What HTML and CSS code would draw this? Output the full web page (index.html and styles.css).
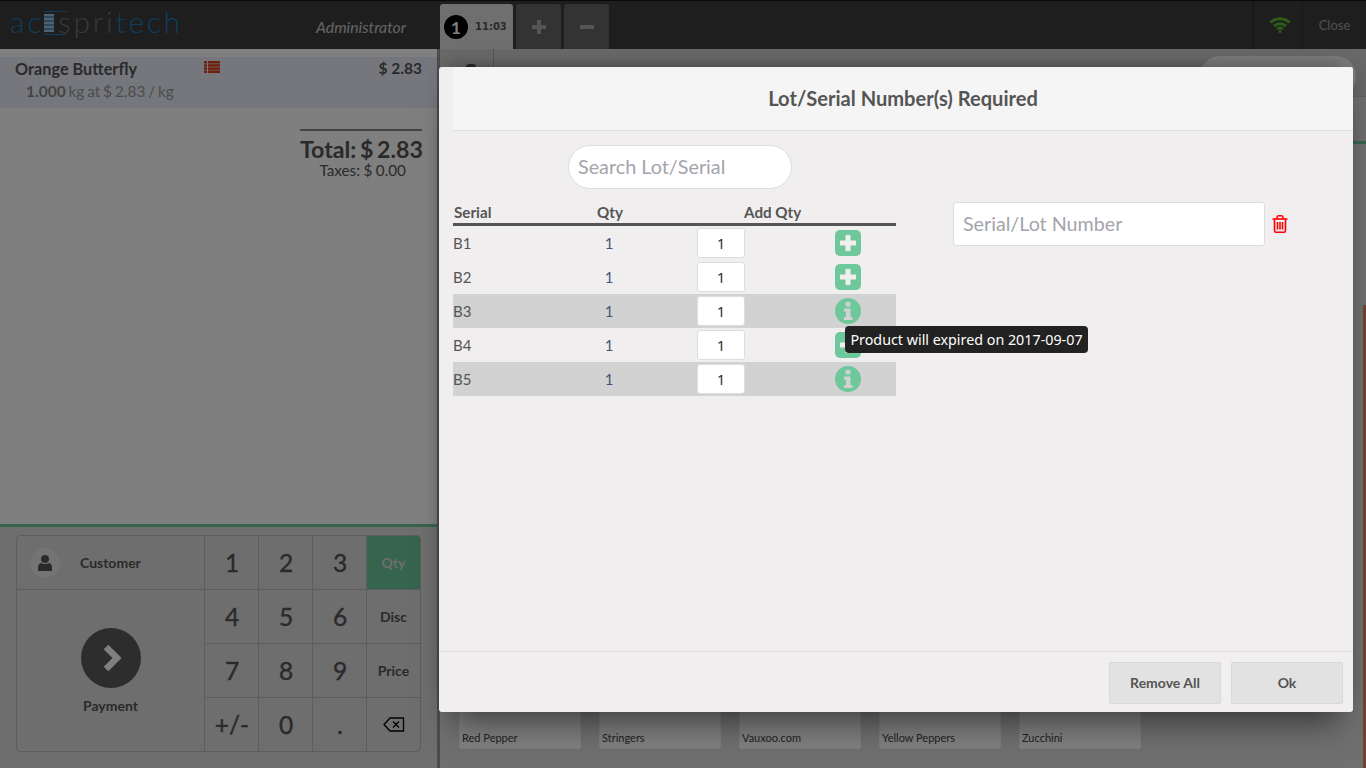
FILE: index.html
```html
<!DOCTYPE html>
<html lang="en">

<head>
  <meta charset="UTF-8">
  <meta name="viewport" content="width=device-width, initial-scale=1.0">
  <title>Point of Sale</title>
  <link rel="stylesheet" href="styles.css">
</head>

<body>

  <header class="topbar">
    <div class="logo">
      <span class="logo-blue">ac</span><span class="logo-bars"></span><span class="logo-grey">spri</span><span class="logo-blue">tech</span>
    </div>
    <div class="username">Administrator</div>
    <div class="tabs">
      <div class="tab active"><span class="tab-num">1</span><span class="tab-time">11:03</span></div>
      <div class="tab"><span class="plus-sign"></span></div>
      <div class="tab"><span class="minus-sign"></span></div>
    </div>
    <div class="status wifi">
      <svg width="22" height="18" viewBox="0 0 22 18" fill="none" stroke="#5cb82e" stroke-width="3">
        <path d="M1.500 6.500C7 1.500 15 1.500 20.500 6.500" />
        <path d="M5 10C8.500 7 13.500 7 17 10" />
        <path d="M8.200 13C10 11.800 12 11.800 13.800 13" />
        <circle cx="11" cy="15.500" r="1.500" fill="#5cb82e" stroke="none" />
      </svg>
    </div>
    <div class="status close">Close</div>
  </header>

  <div class="content">
    <section class="left-pane">
      <div class="order">
        <div class="orderline">
          <div class="orderline-top">
            <span class="product-name">Orange Butterfly</span>
            <svg class="lot-icon" width="16" height="12" viewBox="0 0 16 12" fill="#d8401a">
              <rect x="0" y="0" width="3" height="2.500" />
              <rect x="4" y="0" width="12" height="2.500" />
              <rect x="0" y="3.200" width="3" height="2.500" />
              <rect x="4" y="3.200" width="12" height="2.500" />
              <rect x="0" y="6.400" width="3" height="2.500" />
              <rect x="4" y="6.400" width="12" height="2.500" />
              <rect x="0" y="9.500" width="3" height="2.500" />
              <rect x="4" y="9.500" width="12" height="2.500" />
            </svg>
            <span class="line-price">$ 2.83</span>
          </div>
          <div class="orderline-info"><b>1.000</b> kg at $ 2.83 / kg</div>
        </div>
        <div class="summary">
          <div class="total">Total: $ 2.83</div>
          <div class="taxes">Taxes: $ 0.00</div>
        </div>
      </div>

      <div class="actionpad">
        <div class="numpad-box">
          <div class="pad-left">
            <div class="customer">
              <span class="customer-icon">
                <svg width="14" height="16" viewBox="0 0 14 16" fill="#555">
                  <circle cx="7" cy="4" r="4" />
                  <path d="M0 16V12C0 9.500 2 8 3.500 8C5 9.300 9 9.300 10.500 8C12 8 14 9.500 14 12V16Z" />
                </svg>
              </span>
              <span>Customer</span>
            </div>
            <div class="payment">
              <span class="pay-circle">
                <svg class="chevron" width="20" height="28" viewBox="0 0 20 28" fill="none" stroke="#fff" stroke-width="6.500">
                  <path d="M3 3L14 14L3 25" />
                </svg>
              </span>
              <span>Payment</span>
            </div>
          </div>
          <div class="numpad">
            <div class="key">1</div>
            <div class="key">2</div>
            <div class="key">3</div>
            <div class="key mode selected">Qty</div>
            <div class="key">4</div>
            <div class="key">5</div>
            <div class="key">6</div>
            <div class="key mode">Disc</div>
            <div class="key">7</div>
            <div class="key">8</div>
            <div class="key">9</div>
            <div class="key mode">Price</div>
            <div class="key">+/-</div>
            <div class="key">0</div>
            <div class="key">.</div>
            <div class="key">
              <svg width="22" height="15" viewBox="0 0 22 15" fill="none" stroke="#000" stroke-width="1.300">
                <path d="M7 1H20.500V14H7L1 7.500Z" />
                <path d="M10 4.500L16 10.500M16 4.500L10 10.500" />
              </svg>
            </div>
          </div>
        </div>
      </div>
    </section>

    <section class="right-pane">
      <div class="breadcrumbs">
        <div class="home-cell"><span class="home-cap"></span></div>
        <div class="search-pill"></div>
      </div>
      <div class="categories"></div>
      <div class="products">
        <div class="product">Red Pepper</div>
        <div class="product">Stringers</div>
        <div class="product">Vauxoo.com</div>
        <div class="product">Yellow Peppers</div>
        <div class="product">Zucchini</div>
      </div>
      <div class="scroll-mark"></div>
    </section>
  </div>

  <div class="overlay"></div>

  <div class="modal">
    <h1 class="modal-title">Lot/Serial Number(s) Required</h1>

    <div class="modal-body">
      <div class="lots">
        <input class="search-lot" type="text" placeholder="Search Lot/Serial">
        <div class="lot-row lot-head">
          <span>Serial</span>
          <span class="center">Qty</span>
          <span class="add-qty">Add Qty</span>
        </div>
        <div class="lot-row">
          <span>B1</span>
          <span class="center qty">1</span>
          <input class="qty-input" type="text" value="1">
          <svg class="lot-btn" viewBox="0 0 26 26">
            <rect width="26" height="26" rx="5" fill="#6ec89b" />
            <path d="M10.500 5H15.500V10.500H21V15.500H15.500V21H10.500V15.500H5V10.500H10.500Z" fill="#f0eeee" />
          </svg>
        </div>
        <div class="lot-row">
          <span>B2</span>
          <span class="center qty">1</span>
          <input class="qty-input" type="text" value="1">
          <svg class="lot-btn" viewBox="0 0 26 26">
            <rect width="26" height="26" rx="5" fill="#6ec89b" />
            <path d="M10.500 5H15.500V10.500H21V15.500H15.500V21H10.500V15.500H5V10.500H10.500Z" fill="#f0eeee" />
          </svg>
        </div>
        <div class="lot-row expired">
          <span>B3</span>
          <span class="center qty">1</span>
          <input class="qty-input" type="text" value="1">
          <svg class="lot-btn" viewBox="0 0 26 26">
            <circle cx="13" cy="13" r="13" fill="#6ec89b" />
            <rect x="10.500" y="4" width="5" height="4.500" rx="1" fill="#d2d2d2" />
            <path d="M9 10.500H15.500V19H17.500V22H9V19H11V13.500H9Z" fill="#d2d2d2" />
          </svg>
        </div>
        <div class="lot-row">
          <span>B4</span>
          <span class="center qty">1</span>
          <input class="qty-input" type="text" value="1">
          <svg class="lot-btn" viewBox="0 0 26 26">
            <rect width="26" height="26" rx="5" fill="#6ec89b" />
            <path d="M10.500 5H15.500V10.500H21V15.500H15.500V21H10.500V15.500H5V10.500H10.500Z" fill="#f0eeee" />
          </svg>
        </div>
        <div class="lot-row expired">
          <span>B5</span>
          <span class="center qty">1</span>
          <input class="qty-input" type="text" value="1">
          <svg class="lot-btn" viewBox="0 0 26 26">
            <circle cx="13" cy="13" r="13" fill="#6ec89b" />
            <rect x="10.500" y="4" width="5" height="4.500" rx="1" fill="#d2d2d2" />
            <path d="M9 10.500H15.500V19H17.500V22H9V19H11V13.500H9Z" fill="#d2d2d2" />
          </svg>
        </div>
      </div>

      <div class="serial-entry">
        <input class="serial-input" type="text" placeholder="Serial/Lot Number">
        <svg class="trash" width="16" height="18" viewBox="0 0 16 18" fill="none" stroke="#f00" stroke-width="1.600">
          <path d="M0.500 4H15.500" />
          <path d="M5 4V2.500C5 1.500 6 0.800 6.500 0.800H9.500C10 0.800 11 1.500 11 2.500V4" />
          <path d="M2.500 4V15.500C2.500 16.500 3.200 17.200 4 17.200H12C12.800 17.200 13.500 16.500 13.500 15.500V4" />
          <path d="M5.500 7V14.500M8 7V14.500M10.500 7V14.500" />
        </svg>
      </div>
    </div>

    <div class="modal-footer">
      <button>Remove All</button>
      <button>Ok</button>
    </div>

    <div class="tooltip">Product will expired on 2017-09-07</div>
  </div>

</body>

</html>
```

FILE: styles.css
```css
* {
  margin: 0;
  padding: 0;
  box-sizing: border-box;
  font-family: "Lato", sans-serif;
}

body {
  width: 100vw;
  height: 100vh;
  overflow: hidden;
  display: flex;
  flex-direction: column;
  background-color: #fff;
  color: #555;
  position: relative;
}

/* top bar */
.topbar {
  height: 49px;
  flex: none;
  display: flex;
  background-color: #3c3c3c;
  border-top: 1px solid #111;
}

.logo {
  width: 290px;
  padding-left: 10px;
  font-size: 30px;
  font-weight: 300;
  letter-spacing: 2.7px;
  line-height: 40px;
  display: flex;
  align-items: flex-start;
}

.logo-blue {
  color: #1f7bb8;
}

.logo-grey {
  color: #707070;
  margin-left: 4px;
}

.logo-bars {
  width: 10px;
  height: 18px;
  margin-top: 13px;
  background: repeating-linear-gradient(to bottom, #9fc4e0 0, #9fc4e0 2px, #5d8fb8 2px, #5d8fb8 4px);
  position: relative;
}

.logo-bars::before,
.logo-bars::after {
  content: "";
  position: absolute;
  left: 0;
  width: 23px;
  height: 1px;
  background-color: #1f7bb8;
}

.logo-bars::before {
  top: -3px;
}

.logo-bars::after {
  bottom: -3px;
}

.username {
  width: 150px;
  padding-left: 26px;
  font-size: 15.800px;
  font-style: italic;
  color: #fff;
  opacity: 0.72;
  line-height: 52px;
}

.tabs {
  display: flex;
  gap: 3px;
  flex: 1;
  padding-top: 3px;
}

.tab {
  width: 45px;
  height: 45px;
  background-color: #666;
  border-radius: 3px 3px 0 0;
  display: flex;
  align-items: center;
  justify-content: center;
  position: relative;
}

.tab.active {
  width: 73px;
  background-color: #dfdfdf;
  justify-content: flex-start;
  padding-left: 4px;
  gap: 7px;
}

.tab-num {
  width: 24px;
  height: 24px;
  background-color: #000;
  color: #fff;
  border-radius: 50%;
  font-size: 17px;
  font-weight: 700;
  text-align: center;
  line-height: 25px;
}

.tab-time {
  font-family: "DejaVu Sans", sans-serif;
  font-size: 10px;
  font-weight: 700;
  color: #555;
}

.plus-sign,
.minus-sign {
  width: 14px;
  height: 4px;
  background-color: #aaa;
}

.plus-sign {
  position: relative;
}

.plus-sign::after {
  content: "";
  position: absolute;
  left: 5px;
  top: -5px;
  width: 4px;
  height: 14px;
  background-color: #aaa;
}

.status {
  height: 48px;
  border-left: 1px solid #2a2a2a;
  display: flex;
  align-items: center;
  justify-content: center;
}

.wifi {
  width: 49px;
  padding-left: 4px;
}

.close {
  width: 64px;
  font-size: 13px;
  color: #eee;
  opacity: 0.55;
}

/* page under the popup */
.content {
  flex: 1;
  display: flex;
  min-height: 0;
}

.left-pane {
  width: 440px;
  flex: none;
  display: flex;
  flex-direction: column;
  border-right: 3px solid #999;
  background-color: #fff;
}

.order {
  flex: 1;
  padding-top: 8px;
}

.orderline {
  height: 51px;
  background-color: #eaeef8;
  padding: 1px 15px 0;
}

.orderline-top {
  display: flex;
  align-items: center;
  font-size: 16.300px;
  font-weight: 700;
  height: 20px;
}

.product-name {
  width: 189px;
}

.lot-icon {
  margin-top: -2px;
}

.line-price {
  margin-left: auto;
  font-size: 15.500px;
}

.orderline-info {
  padding-left: 11px;
  margin-top: 4px;
  font-size: 15.500px;
  word-spacing: -1.200px;
  color: #999;
}

.orderline-info b {
  color: #888;
}

.summary {
  width: 122px;
  margin: 21px 0 0 300px;
  border-top: 2px solid #888;
  text-align: right;
}

.total {
  font-size: 23.200px;
  font-weight: 700;
  line-height: 36px;
  word-spacing: -2px;
  white-space: nowrap;
}

.taxes {
  font-size: 15.300px;
  line-height: 14px;
  margin-top: -4px;
  padding-right: 16px;
  word-spacing: -0.500px;
}

.actionpad {
  height: 244px;
  flex: none;
  background-color: #dcdcdc;
  border-top: 3px solid #6ec89b;
  padding: 8px 0 0 16px;
}

.numpad-box {
  width: 405px;
  height: 217px;
  border: 1px solid #bbb;
  border-radius: 4px;
  display: flex;
  overflow: hidden;
}

.pad-left {
  width: 187px;
  display: flex;
  flex-direction: column;
  font-size: 14px;
  font-weight: 700;
}

.customer {
  height: 54px;
  display: flex;
  align-items: center;
  padding-left: 13px;
  gap: 20px;
  border-bottom: 1px solid #bbb;
}

.customer-icon {
  width: 30px;
  height: 30px;
  border-radius: 50%;
  background-color: #e8e8e8;
  display: flex;
  align-items: center;
  justify-content: center;
}

.payment {
  flex: 1;
  display: flex;
  flex-direction: column;
  align-items: center;
  padding-top: 38px;
  gap: 9px;
}

.pay-circle {
  width: 60px;
  height: 60px;
  border-radius: 50%;
  background-color: #5a5a5a;
  display: flex;
  align-items: center;
  justify-content: center;
  padding-left: 4px;
}

.numpad {
  display: grid;
  grid-template-columns: repeat(4, 54px);
  grid-template-rows: 53px repeat(3, 54px);
}

.key {
  border-left: 1px solid #bbb;
  border-top: 1px solid #bbb;
  display: flex;
  align-items: center;
  justify-content: center;
  padding-left: 1px;
  font-size: 24.500px;
  -webkit-text-stroke: 0.4px #555;
  color: #555;
}

.key:nth-child(-n+4) {
  border-top: none;
}

.key.mode {
  font-size: 14px;
  font-weight: 700;
  padding-left: 0;
  -webkit-text-stroke: 0;
}

.key.selected {
  background-color: #6ec89b;
  color: #ddd;
}

.right-pane {
  flex: 1;
  display: flex;
  flex-direction: column;
  background-color: #dedede;
  position: relative;
}

.breadcrumbs {
  height: 48px;
  display: flex;
  justify-content: space-between;
  border-bottom: 1px solid #bbb;
  background: linear-gradient(#d2d2d2, #c8c8c8);
}

.home-cell {
  width: 54px;
  border-right: 1px solid #aaa;
}

.home-cap {
  display: block;
  width: 10px;
  height: 3px;
  margin: 15px 0 0 26px;
  border-radius: 5px 5px 0 0;
  background-color: #555;
}

.search-pill {
  width: 156px;
  height: 41px;
  margin: 7px 10px 0 0;
  border-radius: 20px;
  background-color: #f4f4f4;
}

.categories {
  height: 47px;
  background-color: #d8d8d8;
  border-bottom: 3px solid #6ec89b;
}

.products {
  flex: 1;
  display: flex;
  align-items: flex-end;
  gap: 18px;
  padding: 0 0 19px 19px;
}

.product {
  width: 122px;
  height: 90px;
  background-color: #fff;
  border: 1px solid #f4f4f4;
  border-radius: 2px;
  font-size: 11px;
  color: #444;
  display: flex;
  align-items: flex-end;
  padding: 0 2px 4px;
}

.scroll-mark {
  position: absolute;
  right: 0;
  top: 256px;
  bottom: 0;
  width: 3px;
  background-color: #e08a5e;
}

.overlay {
  position: absolute;
  inset: 0;
  background-color: rgba(0, 0, 0, 0.5);
}

/* popup */
.modal {
  position: absolute;
  left: 439px;
  top: 67px;
  width: 914px;
  height: 645px;
  background-color: #f0eeee;
  border-radius: 3px;
  box-shadow: 0 24px 30px -14px rgba(0, 0, 0, 0.5), 0 -8px 18px -10px rgba(0, 0, 0, 0.4);
  display: flex;
  flex-direction: column;
}

.modal-title {
  height: 64px;
  flex: none;
  margin-left: 14px;
  background-color: #f5f5f5;
  border-bottom: 1px solid #e0e0e0;
  border-radius: 0 3px 0 0;
  font-size: 20.100px;
  font-weight: 700;
  line-height: 63px;
  text-align: center;
}

.modal-body {
  flex: 1;
  display: flex;
  padding: 14px 0 0 14px;
}

input {
  border: 1px solid #ddd;
  background-color: #fff;
  outline: none;
  color: #555;
}

input::placeholder {
  color: #a4a4ac;
  opacity: 1;
}

.lots {
  width: 443px;
}

.search-lot {
  display: block;
  width: 224px;
  height: 44px;
  margin-left: 115px;
  margin-bottom: 14px;
  border-radius: 22px;
  padding: 0 9px 2px;
  font-size: 19.800px;
}

.lot-row {
  display: grid;
  grid-template-columns: 120px 72px 152px 99px;
  height: 34px;
  align-items: center;
  font-size: 15px;
}

.lot-row.expired {
  background-color: #d2d2d2;
}

.lot-head {
  height: 23px;
  border-bottom: 3px solid #555;
  font-weight: 700;
  padding-left: 1px;
  font-size: 15.200px;
  line-height: 18px;
  align-items: start;
}

.center {
  text-align: center;
}

.qty {
  color: #445577;
}

.add-qty {
  grid-column: 3 / 5;
  padding-left: 98px;
}

.qty-input {
  width: 48px;
  height: 30px;
  justify-self: center;
  border-radius: 3px;
  text-align: center;
  font-size: 15px;
  font-family: "Noto Sans", sans-serif;
  color: #333;
}

.lot-btn {
  width: 26px;
  height: 26px;
  margin-left: 38px;
}

.serial-entry {
  margin: 57px 0 0 57px;
  display: flex;
  align-items: center;
  align-self: flex-start;
  gap: 7px;
}

.serial-input {
  width: 312px;
  height: 44px;
  border-radius: 3px;
  padding: 0 9px 2px;
  font-size: 19.700px;
}

.modal-footer {
  height: 61px;
  flex: none;
  border-top: 1px solid #ddd;
  display: flex;
  justify-content: flex-end;
  gap: 10px;
  padding: 10px 10px 0 0;
}

button {
  width: 112px;
  height: 42px;
  padding-bottom: 2px;
  background-color: #e2e2e2;
  border: 1px solid #d8d8d8;
  border-radius: 2px;
  font-size: 14px;
  font-weight: 700;
  color: #555;
}

.tooltip {
  position: absolute;
  left: 406px;
  top: 259px;
  width: 243px;
  height: 27px;
  background-color: #222;
  color: #fff;
  border-radius: 4px;
  font-family: "Noto Sans", sans-serif;
  font-size: 14.300px;
  line-height: 27px;
  text-align: center;
  white-space: nowrap;
}
```
